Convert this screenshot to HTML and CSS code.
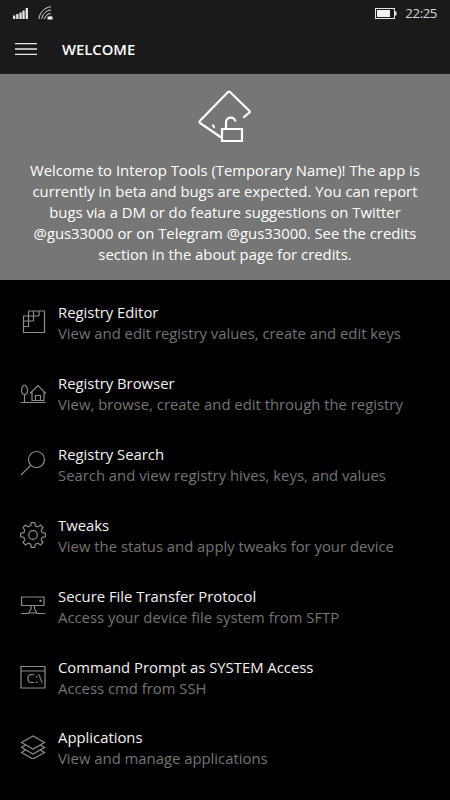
FILE: index.html
```html
<!DOCTYPE html>
<html lang="en">
<head>
<meta charset="utf-8">
<title>Welcome</title>
<link rel="stylesheet" href="styles.css">
</head>
<body>
<div class="top">
  <div class="status">
    <svg class="sig" width="15" height="12" viewBox="0 0 15 12"><path fill="#e6e6e6" d="M0 8.500h2.300V12H0zM3.200 7h2.300v5H3.200zM6.400 5.500h2.300V12H6.400zM9.400 3.500h2.300V12H9.400zM12.600 1H15v11h-2.400z"/></svg>
    <svg class="wifi" width="15" height="14" viewBox="0 0 15 14"><g fill="none" stroke="#d8d8d8" stroke-width="1"><path d="M1 13C1.500 7 6 1.500 13 .8"/><path d="M3.800 13C4.200 9 7.500 4.500 13 4"/><path d="M6.500 13C6.800 10.500 9 7.800 12.500 7.500"/></g><path fill="#f0f0f0" d="M9.500 10.500h2.500V9.500l1 1h1.500v3h-5z"/></svg>
    <span class="spacer"></span>
    <svg class="batt" width="22" height="11" viewBox="0 0 22 11"><rect x=".5" y=".5" width="19" height="10" fill="none" stroke="#e6e6e6"/><rect x="2" y="2" width="13" height="7" fill="#f2f2f2"/><rect x="20" y="3.500" width="1.500" height="4" fill="#e6e6e6"/></svg>
    <span class="clock">22:25</span>
  </div>
  <header class="bar">
    <svg class="burger" width="22" height="12" viewBox="0 0 22 12"><path stroke="#e8e8e8" stroke-width="1.300" d="M0 .7h22M0 6h22M0 11.300h22"/></svg>
    <h1 class="title">WELCOME</h1>
  </header>
</div>
<section class="banner">
  <svg class="hero" width="54" height="54" viewBox="0 0 54 54"><g fill="none" stroke="#fff" stroke-width="2.200" stroke-linejoin="round" stroke-linecap="round"><path d="M22.500 47L2 33a1.500 1.500 0 0 1 0-2.200L30 2a1.500 1.500 0 0 1 2 0l19.500 19a1 1 0 0 1 0 1.500L46 27"/><path stroke-linecap="butt" stroke-linejoin="miter" d="M24 39h20v12H24z"/><path stroke-linecap="butt" d="M28 38.500v-6a4.800 4.800 0 0 1 9.500-1"/><path d="M15 35.500l1 1.500"/></g></svg>
  <p class="intro">Welcome to Interop Tools (Temporary Name)! The app is currently in beta and bugs are expected. You can report bugs via a DM or do feature suggestions on Twitter @gus33000 or on Telegram @gus33000. See the credits section in the about page for credits.</p>
</section>
<ul class="menu">
  <li class="item">
    <svg class="ico" width="26" height="26" viewBox="0 0 26 26"><path d="M8.500 3H24.500V24.500H3.500V8H8.500ZM3.500 13H13.500M3.500 18.500H8.500V8M3.500 8H19M13.500 3V13M19 3V8"/></svg>
    <div class="txt"><div class="name">Registry Editor</div><div class="desc">View and edit registry values, create and edit keys</div></div>
  </li>
  <li class="item">
    <svg class="ico" width="26" height="26" viewBox="0 0 26 26"><path d="M.500 23.500h25M4.500 23.500v-8M4.500 15.500c-2 0-3-1.500-3-3.500 0-2.500 1.500-6 3-6s3 3.500 3 6c0 2-1 3.500-3 3.500zM10 14.500l8-8 8 8M12 13v8.500h12V13M15.500 21.500v-5h5v5"/></svg>
    <div class="txt"><div class="name">Registry Browser</div><div class="desc">View, browse, create and edit through the registry</div></div>
  </li>
  <li class="item">
    <svg class="ico" width="26" height="26" viewBox="0 0 26 26"><circle cx="16.500" cy="9.500" r="8"/><path d="M10.700 15.300L1 25"/></svg>
    <div class="txt"><div class="name">Registry Search</div><div class="desc">Search and view registry hives, keys, and values</div></div>
  </li>
  <li class="item">
    <svg class="ico" width="26" height="28" viewBox="0 0 26 28"><defs><path id="tooth" d="M-2.300-9.200L-1.740-12.380H1.740L2.300-9.200 4.890-8.140"/></defs><g transform="translate(13 14)"><circle r="4.300"/><use href="#tooth"/><use href="#tooth" transform="rotate(45)"/><use href="#tooth" transform="rotate(90)"/><use href="#tooth" transform="rotate(135)"/><use href="#tooth" transform="rotate(180)"/><use href="#tooth" transform="rotate(225)"/><use href="#tooth" transform="rotate(270)"/><use href="#tooth" transform="rotate(315)"/></g></svg>
    <div class="txt"><div class="name">Tweaks</div><div class="desc">View the status and apply tweaks for your device</div></div>
  </li>
  <li class="item">
    <svg class="ico" width="26" height="26" viewBox="0 0 26 26"><path d="M1.500 5h22.500v8.500H1.500zM11 13.500V17l-2.500 4M14.500 13.500V17l2.500 4M8.500 21h8.500M1 21.500h7.500M17 21.500h8"/><path d="M20 8.300h1v1h-1z"/></svg>
    <div class="txt"><div class="name">Secure File Transfer Protocol</div><div class="desc">Access your device file system from SFTP</div></div>
  </li>
  <li class="item">
    <svg class="ico" width="26" height="26" viewBox="0 0 26 26"><path d="M1 3.500h24v21.500H1zM1 8h24"/><text class="prompt" x="6.500" y="20">C:\</text></svg>
    <div class="txt"><div class="name">Command Prompt as SYSTEM Access</div><div class="desc">Access cmd from SSH</div></div>
  </li>
  <li class="item">
    <svg class="ico" width="26" height="26" viewBox="0 0 26 26"><path d="M13 3L1.500 9.500 13 16 24.500 9.500zM5.500 12L1.500 14.500 13 21 24.500 14.500 20.500 12M5.500 17L1.500 19.500 13 26 24.500 19.500 20.500 17"/></svg>
    <div class="txt"><div class="name">Applications</div><div class="desc">View and manage applications</div></div>
  </li>
</ul>
</body>
</html>
```
FILE: styles.css
```css
* { box-sizing: border-box; }
html, body { margin: 0; padding: 0; }
body { width: 450px; height: 800px; overflow: hidden; background: #000; color: #fff; font-family: "Open Sans", "Noto Sans", sans-serif; }
.top { background: #1a1a1a; height: 74px; display: flex; flex-direction: column; }
.status { height: 26px; display: flex; align-items: center; padding: 0 13px 0 13px; color: #d6d6d6; }
.sig { margin-right: 10px; }
.spacer { flex: 1; }
.batt { margin-right: 8px; }
.clock { font-size: 13.200px; letter-spacing: -.4px; line-height: 26px; }
.bar { flex: 1; display: flex; align-items: center; padding: 0 0 2px 15px; }
.burger { margin-right: 25px; }
.title { margin: 0; font-size: 14.800px; font-weight: 600; line-height: 20px; }
.banner { height: 206px; background: #767676; display: flex; flex-direction: column; align-items: center; padding-top: 16px; }
.hero { display: block; }
.intro { margin: 16px 0 0; width: 400px; text-align: center; font-size: 14.850px; line-height: 21px; color: #fff; }
.menu { list-style: none; margin: 0; padding: 22.400px 0 0 20px; }
.item { height: 70.830px; display: flex; align-items: flex-start; }
.ico { flex: none; margin: 6px 12px 0 0; fill: none; stroke: #8c8c8c; stroke-width: 1.200; }
.prompt { font-family: "Open Sans", sans-serif; font-size: 13px; fill: #8c8c8c; stroke: none; }
.name { font-size: 14.850px; line-height: 21px; color: #f2f2f2; }
.desc { font-size: 14.850px; line-height: 21px; color: #747474; }
```
